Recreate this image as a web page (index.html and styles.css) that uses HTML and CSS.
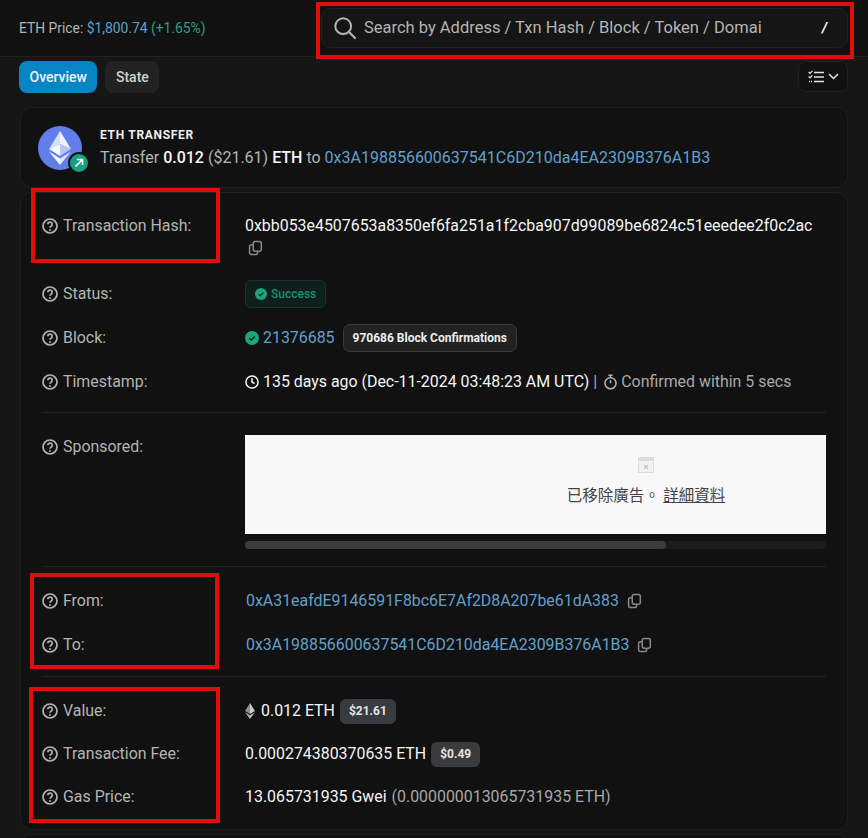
FILE: index.html
```html
<!DOCTYPE html>
<html lang="en">
<head>
    <meta charset="UTF-8">
    <meta name="viewport" content="width=device-width, initial-scale=1.0">
    <title>Transaction Details</title>
    <link rel="stylesheet" href="styles.css">
</head>
<body>
    <svg class="sprites" width="0" height="0">
        <symbol id="i-help" viewBox="0 0 16 16">
            <circle cx="8" cy="8" r="7" fill="none" stroke="currentColor" stroke-width="1.7"/>
            <path d="M5.800 6.300a2.200 2.200 0 1 1 3.500 1.750c-.8.55-1.300.9-1.300 1.750" fill="none" stroke="currentColor" stroke-width="1.700"/>
            <circle cx="8" cy="11.900" r="1" fill="currentColor"/>
        </symbol>
        <symbol id="i-copy" viewBox="0 0 16 16">
            <rect x="5.600" y="1" width="8.600" height="10.400" rx="2" fill="none" stroke="currentColor" stroke-width="1.600"/>
            <path d="M5.600 4.400H3.600a1.900 1.900 0 0 0-1.900 1.900v6.800A1.900 1.900 0 0 0 3.600 15h4.800a1.900 1.900 0 0 0 1.900-1.900v-1.700" fill="none" stroke="currentColor" stroke-width="1.600"/>
        </symbol>
        <symbol id="i-check" viewBox="0 0 16 16">
            <circle cx="8" cy="8" r="8" fill="currentColor"/>
            <path d="M4.900 8.200l2.200 2.200 4-4.200" fill="none" stroke="#111" stroke-width="1.500"/>
        </symbol>
    </svg>

    <div class="topbar">
        <div class="price">ETH Price: <a>$1,800.74</a> <span class="up">(+1.65%)</span></div>
        <div class="search">
            <svg class="search-icon" viewBox="0 0 22 22"><circle cx="9.200" cy="9.200" r="7.900" fill="none" stroke="currentColor" stroke-width="2"/><path d="M15 15l6 6" stroke="currentColor" stroke-width="2.200" stroke-linecap="round"/></svg>
            <span class="search-text">Search by Address / Txn Hash / Block / Token / Domai</span>
            <span class="search-key">/</span>
        </div>
    </div>

    <div class="tabs">
        <button class="tab active">Overview</button>
        <button class="tab">State</button>
        <button class="tools">
            <svg width="16" height="14" viewBox="0 0 16 14"><path d="M6 2.500h10M6 7h10M6 11.500h10" stroke="currentColor" stroke-width="1.600"/><path d="M.6 2l1.400 1.400L4.400.8M.6 6.500L2 7.900l2.400-2.600" fill="none" stroke="currentColor" stroke-width="1.200"/><path d="M1 11.500h3" stroke="currentColor" stroke-width="1.600" stroke-dasharray="1.200 .8"/></svg>
            <svg width="11" height="7" viewBox="0 0 11 7"><path d="M1 1l4.500 4.500L10 1" fill="none" stroke="currentColor" stroke-width="1.500"/></svg>
        </button>
    </div>

    <div class="card summary">
        <div class="coin">
            <svg width="44" height="44" viewBox="0 0 44 44">
                <circle cx="22" cy="22" r="22" fill="#627eea"/>
                <path d="M22 5v13l-11 5z" fill="#fff" fill-opacity=".75"/>
                <path d="M22 5v13l11 5z" fill="#fff" fill-opacity=".9"/>
                <path d="M22 18l-11 5 11 7z" fill="#fff" fill-opacity=".95"/>
                <path d="M22 18l11 5-11 7z" fill="#fff" fill-opacity=".55"/>
                <path d="M11 25.500l11 7V39z" fill="#fff" fill-opacity=".95"/>
                <path d="M33 25.500l-11 7V39z" fill="#fff" fill-opacity=".8"/>
            </svg>
            <span class="coin-badge">
                <svg width="10" height="10" viewBox="0 0 10 10"><path d="M1.500 8.500L8 2M3 1.500h5.500V7" fill="none" stroke="#fff" stroke-width="1.700"/></svg>
            </span>
        </div>
        <div>
            <div class="summary-title">ETH TRANSFER</div>
            <div class="summary-line">Transfer <b>0.012</b> ($21.61) <b>ETH</b> to <a>0x3A198856600637541C6D210da4EA2309B376A1B3</a></div>
        </div>
    </div>

    <div class="card details">
        <section class="group">
            <div class="row row-hash">
                <div class="label"><svg class="help"><use href="#i-help"/></svg>Transaction Hash:</div>
                <div class="value hash">
                    <div>0xbb053e4507653a8350ef6fa251a1f2cba907d99089be6824c51eeedee2f0c2ac</div>
                    <svg class="copy"><use href="#i-copy"/></svg>
                </div>
            </div>
            <div class="row">
                <div class="label"><svg class="help"><use href="#i-help"/></svg>Status:</div>
                <div class="value"><span class="status"><svg class="status-icon"><use href="#i-check"/></svg>Success</span></div>
            </div>
            <div class="row">
                <div class="label"><svg class="help"><use href="#i-help"/></svg>Block:</div>
                <div class="value"><svg class="block-check"><use href="#i-check"/></svg><a>21376685</a><span class="confirm">970686 Block Confirmations</span></div>
            </div>
            <div class="row">
                <div class="label"><svg class="help"><use href="#i-help"/></svg>Timestamp:</div>
                <div class="value">
                    <svg class="clock" viewBox="0 0 16 16"><circle cx="8" cy="8" r="6.900" fill="none" stroke="currentColor" stroke-width="1.800"/><path d="M8 3.800V8l2.900 1.900" fill="none" stroke="currentColor" stroke-width="1.800"/></svg>
                    <span>135 days ago (Dec-11-2024 03:48:23 AM UTC)</span>
                    <span class="muted pipe">|</span>
                    <svg class="clock watch" viewBox="0 0 16 16"><circle cx="8" cy="9.300" r="5.900" fill="none" stroke="currentColor" stroke-width="1.600"/><path d="M5.800.9h4.400M8 1v2.500M8 6v3.300" fill="none" stroke="currentColor" stroke-width="1.600"/></svg>
                    <span class="muted">Confirmed within 5 secs</span>
                </div>
            </div>
        </section>

        <section class="group sponsored">
            <div class="row row-ad">
                <div class="label"><svg class="help"><use href="#i-help"/></svg>Sponsored:</div>
                <div class="ad-wrap">
                    <div class="ad-view">
                        <div class="ad">
                            <svg class="ad-icon" viewBox="0 0 16 16"><rect x=".5" y=".5" width="15" height="15" fill="#f3f3f3" stroke="#dcdcdc"/><rect x="1" y="1" width="14" height="3" fill="#dcdcdc"/><path d="M6 8l4 4M10 8l-4 4" stroke="#c4c4c4" stroke-width="1.200"/></svg>
                            <div class="ad-text">已移除廣告。 <u>詳細資料</u></div>
                        </div>
                    </div>
                    <div class="ad-scroll"><div class="ad-thumb"></div></div>
                </div>
            </div>
        </section>

        <section class="group addresses">
            <div class="row">
                <div class="label"><svg class="help"><use href="#i-help"/></svg>From:</div>
                <div class="value"><a class="addr">0xA31eafdE9146591F8bc6E7Af2D8A207be61dA383</a><svg class="copy inline"><use href="#i-copy"/></svg></div>
            </div>
            <div class="row">
                <div class="label"><svg class="help"><use href="#i-help"/></svg>To:</div>
                <div class="value"><a class="addr">0x3A198856600637541C6D210da4EA2309B376A1B3</a><svg class="copy inline"><use href="#i-copy"/></svg></div>
            </div>
        </section>

        <section class="group tight">
            <div class="row">
                <div class="label"><svg class="help"><use href="#i-help"/></svg>Value:</div>
                <div class="value">
                    <svg class="eth" viewBox="0 0 10 16"><path d="M5 0L0 8l5 3z" fill="#8e8e8e"/><path d="M5 0l5 8-5 3z" fill="#c8c8c8"/><path d="M0 9.300L5 16l5-6.700-5 3z" fill="#b4b4b4"/></svg>
                    <span>0.012 ETH</span><span class="usd">$21.61</span>
                </div>
            </div>
            <div class="row">
                <div class="label"><svg class="help"><use href="#i-help"/></svg>Transaction Fee:</div>
                <div class="value"><span>0.000274380370635 ETH</span><span class="usd">$0.49</span></div>
            </div>
            <div class="row">
                <div class="label"><svg class="help"><use href="#i-help"/></svg>Gas Price:</div>
                <div class="value"><span>13.065731935 Gwei</span><span class="muted gas">(0.000000013065731935 ETH)</span></div>
            </div>
        </section>
    </div>
    <div class="card next"></div>

    <!-- red annotation boxes drawn over the screenshot -->
    <div class="mark mark-search"></div>
    <div class="mark mark-hash"></div>
    <div class="mark mark-from"></div>
    <div class="mark mark-value"></div>
</body>
</html>
```

FILE: styles.css
```css
html {
    background: #161616;
}
body {
    margin: 0;
    height: 838px;
    overflow: hidden;
    position: relative;
    font-family: Roboto, "Liberation Sans", sans-serif;
    font-size: 15.920px;
    line-height: 22px;
    color: #f5f5f5;
    background: #161616;
}
a {
    color: #62a0cc;
}
b {
    font-weight: 500;
    color: #f5f5f5;
}
.sprites {
    position: absolute;
}

.topbar {
    height: 57px;
    box-sizing: border-box;
    display: flex;
    align-items: center;
    justify-content: space-between;
    padding: 0 20px 1px 19px;
    background: #111;
    border-bottom: 1px solid #222;
}
.price {
    font-size: 13.850px;
    color: #b4b4b4;
}
.price .up {
    color: #2f9e7e;
}
.search {
    width: 527px;
    height: 40px;
    box-sizing: border-box;
    display: flex;
    align-items: center;
    padding: 0 12px;
    background: #151515;
    border: 1px solid #222;
    border-radius: 10px;
    color: #b4b4b4;
    font-size: 16.500px;
}
.search-icon {
    width: 22px;
    height: 22px;
    flex: none;
    margin-right: 8px;
}
.search-text {
    white-space: nowrap;
}
.search-key {
    margin-left: auto;
    margin-right: 8px;
    color: #fff;
    font-weight: 700;
    font-style: italic;
    font-size: 14px;
}

.tabs {
    display: flex;
    gap: 8px;
    padding: 4px 20px 0 19px;
    height: 32px;
}
.tab {
    font: 500 14px Roboto, sans-serif;
    height: 32px;
    padding: 0 10.500px;
    border: 0;
    border-radius: 8px;
    background: #222;
    color: #d0d0d0;
}
.tab.active {
    background: #0784c3;
    color: #f2f2f2;
}
.tools {
    margin-left: auto;
    width: 50px;
    height: 31px;
    display: flex;
    align-items: center;
    justify-content: center;
    gap: 4px;
    padding: 0;
    background: #111;
    border: 1px solid #222;
    border-radius: 8px;
    color: #e4e4e4;
}

.card {
    margin: 0 20px 0 20px;
    background: #111;
    border: 1px solid #1f1f1f;
    border-radius: 12px;
}
.summary {
    margin-top: 14px;
    height: 81px;
    box-sizing: border-box;
    display: flex;
    align-items: center;
    padding-left: 17px;
    gap: 18px;
}
.coin {
    position: relative;
    width: 44px;
    height: 44px;
}
.coin svg {
    display: block;
}
.coin-badge {
    position: absolute;
    left: 30px;
    top: 26px;
    width: 22px;
    height: 22px;
    box-sizing: border-box;
    display: flex;
    align-items: center;
    justify-content: center;
    background: #17a085;
    border: 2px solid #111;
    border-radius: 50%;
}
.summary-title {
    font-size: 12px;
    line-height: 16px;
    font-weight: 700;
    letter-spacing: .7px;
    color: #eee;
    margin-bottom: 4px;
}
.summary-line {
    font-size: 16px;
    color: #b4b4b4;
}

.details {
    margin-top: 4px;
    height: 638px;
    box-sizing: border-box;
    padding: 0 21px;
}
.group {
    display: flex;
    flex-direction: column;
    gap: 22px;
    padding: 22px 0 19px;
    border-bottom: 1px solid #222;
}
.group:last-child {
    border-bottom: 0;
}
.group.tight {
    gap: 21px;
    padding-top: 23px;
}
.sponsored {
    padding-top: 22px;
    padding-bottom: 17px;
}
.addresses {
    padding-top: 23px;
    padding-bottom: 20px;
}
.row {
    display: grid;
    grid-template-columns: 203px 1fr;
    grid-template-rows: 22px;
    height: 22px;
}
.row-hash {
    height: 46px;
}
.row-ad {
    height: 114px;
}
.label {
    display: flex;
    align-items: center;
    height: 22px;
    color: #b4b4b4;
}
.row-ad .label {
    padding-top: 1px;
}
.help {
    width: 16px;
    height: 16px;
    margin-right: 5px;
    flex: none;
}
.value {
    display: flex;
    align-items: center;
    white-space: nowrap;
}
.hash {
    display: block;
}
.copy {
    width: 15px;
    height: 16px;
    color: #8a8a8a;
    display: block;
    margin: 3px 0 0 3px;
}
.copy.inline {
    margin: 0 0 0 8px;
}
.addr {
    margin-left: 1px;
}
.status {
    display: inline-flex;
    align-items: center;
    height: 28px;
    box-sizing: border-box;
    padding: 0 9px;
    font-size: 12px;
    font-weight: 500;
    color: #1c8f72;
    background: #0f1f1c;
    border: 1px solid #16352e;
    border-radius: 6px;
}
.status-icon {
    width: 12px;
    height: 12px;
    margin-right: 4px;
    color: #1ba57f;
}
.block-check {
    width: 14px;
    height: 14px;
    margin-right: 4px;
    color: #1ba57f;
}
.confirm {
    margin-left: 8px;
    height: 28px;
    box-sizing: border-box;
    display: inline-flex;
    align-items: center;
    padding: 0 9px;
    font-size: 12px;
    font-weight: 700;
    color: #eee;
    background: #222;
    border: 1px solid #3a3a3a;
    border-radius: 7px;
}
.clock {
    width: 14px;
    height: 14px;
    margin-right: 4px;
    flex: none;
}
.watch {
    width: 15px;
    height: 16px;
    margin-right: 3px;
    color: #b4b4b4;
}
.muted {
    color: #a8a8a8;
}
.pipe {
    margin: 0 6px 0 4px;
}
.ad-wrap {
    width: 581px;
}
.ad-view {
    height: 99px;
    overflow: hidden;
}
.ad {
    width: 802px;
    height: 99px;
    background: #f8f8f8;
    color: #333;
    display: flex;
    flex-direction: column;
    align-items: center;
}
.ad-icon {
    width: 16px;
    height: 16px;
    margin-top: 22px;
}
.ad-text {
    margin-top: 9px;
    font-family: "Noto Sans CJK TC", sans-serif;
    font-size: 15.500px;
    line-height: 24px;
    color: #444;
}
.ad-scroll {
    margin-top: 7px;
    height: 8px;
    border-radius: 4px;
    background: #1c1c1c;
}
.ad-thumb {
    width: 421px;
    height: 8px;
    border-radius: 4px;
    background: #3c3c3c;
}
.eth {
    width: 10px;
    height: 16px;
    margin-right: 6px;
}
.usd {
    margin-left: 5px;
    height: 25px;
    display: inline-flex;
    align-items: center;
    padding: 0 9px;
    font-size: 12px;
    font-weight: 700;
    color: #e4e4e4;
    background: #393b3e;
    border-radius: 6px;
}
.gas {
    margin-left: 5px;
}
.next {
    margin-top: 4px;
    height: 40px;
}

.mark {
    position: absolute;
    box-sizing: border-box;
    border: 4px solid #e00d0d;
    pointer-events: none;
}
.mark-search {
    left: 316px;
    top: 2px;
    width: 538px;
    height: 57px;
}
.mark-hash {
    left: 31px;
    top: 188px;
    width: 189px;
    height: 75px;
}
.mark-from {
    left: 30px;
    top: 573px;
    width: 189px;
    height: 96px;
}
.mark-value {
    left: 29px;
    top: 687px;
    width: 191px;
    height: 136px;
}
```
